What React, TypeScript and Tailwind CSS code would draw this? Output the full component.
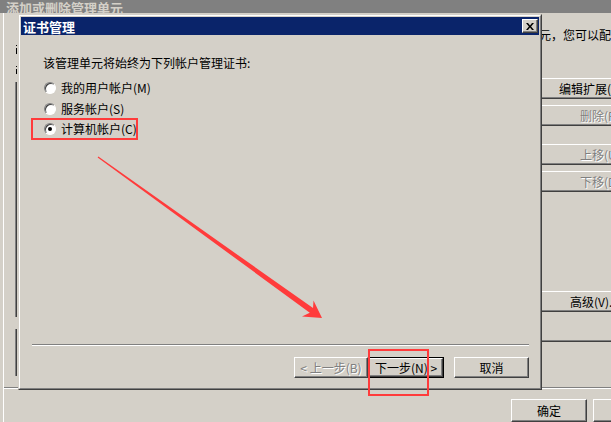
import React from "react";

const raised =
  "border border-t-white border-l-white border-r-[#404040] border-b-[#404040] shadow-[inset_-1px_-1px_#808080]";
const disabledText = "text-[#808080] [text-shadow:1px_1px_0_#fff]";

function Radio({ checked }: { checked?: boolean }) {
  return (
    <span className="w-[12px] h-[12px] shrink-0 rounded-full bg-white border border-t-[#808080] border-l-[#808080] border-r-white border-b-white shadow-[inset_1px_1px_0_#404040] flex items-center justify-center">
      {checked && <span className="w-[4px] h-[4px] rounded-full bg-black" />}
    </span>
  );
}

function CloseButton() {
  return (
    <div className={`w-[16px] h-[14px] bg-[#d4d0c8] flex items-center justify-center ${raised}`}>
      <svg width="8" height="7" viewBox="0 0 8 7">
        <path d="M0 0H2L4 2.4L6 0H8L5.1 3.5L8 7H6L4 4.6L2 7H0L2.9 3.5Z" fill="#000" />
      </svg>
    </div>
  );
}

function SideButton({ label, pad, disabled }: { label: string; pad: string; disabled?: boolean }) {
  return (
    <div
      className={`h-[21px] w-[110px] flex items-center leading-none ${pad} ${raised} ${
        disabled ? disabledText : "text-black"
      }`}
    >
      {label}
    </div>
  );
}

export default function App() {
  return (
    <div className="relative w-[611px] h-[422px] overflow-hidden bg-[#d4d0c8] flex flex-col text-[12px] font-['SimSun','Noto_Sans_CJK_SC',sans-serif]">
      {/* background dialog */}
      <div className="h-[15px] bg-[#808080] pl-[6px] text-[13px] text-[#d4d0c8] font-bold leading-[16px] overflow-hidden">
        添加或删除管理单元
      </div>
      <div className="flex-1 flex flex-col ml-[3px] border-l border-white">
        <div className="h-[374px] flex">
          <div className="w-[537px] flex flex-col pl-[11px]">
            <div className="mt-[32px] ml-[1px] w-[1px] h-[1px] bg-black" />
            <div className="mt-[2px] ml-[1px] w-[1px] h-[6px] bg-black" />
            <div className="mt-[12px] ml-[1px] w-[1px] h-[1px] bg-black" />
            <div className="mt-[2px] ml-[1px] w-[1px] h-[5px] bg-black" />
            <div className="mt-[8px] w-[2px] h-[235px] border-l border-l-[#808080] border-r border-r-[#404040]" />
            <div className="mt-[12px] w-[2px] h-[47px] border-l border-l-[#808080] border-r border-r-[#404040]" />
          </div>
          <div className="w-[70px] flex flex-col">
            <div className="mt-[14px] -ml-[2px] leading-[16px] whitespace-nowrap">元，您可以配置</div>
            <div className="mt-[35px]">
              <SideButton label="编辑扩展(X)..." pad="pl-[17px]" />
            </div>
            <div className="mt-[6px]">
              <SideButton label="删除(R)" pad="pl-[38px]" disabled />
            </div>
            <div className="mt-[18px]">
              <SideButton label="上移(U)" pad="pl-[38px]" disabled />
            </div>
            <div className="mt-[6px]">
              <SideButton label="下移(D)" pad="pl-[38px]" disabled />
            </div>
            <div className="mt-[99px]">
              <SideButton label="高级(V)..." pad="pl-[28px]" />
            </div>
            <div className="mt-[28px] h-[1px] bg-[#808080] w-[110px]" />
            <div className="h-[1px] bg-[#404040] w-[110px]" />
          </div>
        </div>
        <div className="h-[1px] bg-[#808080]" />
        <div className="h-[1px] bg-white" />
        <div className="mt-[10px] ml-[507px] flex gap-[6px]">
          <div className={`w-[76px] h-[23px] shrink-0 flex items-center justify-center ${raised}`}>确定</div>
          <div className={`w-[76px] h-[23px] shrink-0 flex items-center justify-center ${raised}`}>取消</div>
        </div>
      </div>

      {/* foreground dialog */}
      <div className="absolute left-[18px] top-[14px] w-[524px] h-[376px] bg-[#d4d0c8] border border-t-[#d4d0c8] border-l-[#d4d0c8] border-r-[#404040] border-b-[#404040] flex flex-col">
        <div className="flex-1 flex flex-col border border-t-white border-l-white border-r-[#808080] border-b-[#808080] p-[1px]">
          <div className="h-[18px] bg-[#0a246a] flex items-center justify-between pl-[2px] pr-[1px]">
            <span className="text-white text-[13px] font-bold leading-none">证书管理</span>
            <CloseButton />
          </div>
          <p className="mt-[20px] pl-[22px] leading-[16px] text-black">该管理单元将始终为下列帐户管理证书:</p>
          <div className="mt-[7px] pl-[23px] flex flex-col">
            {[
              { label: "我的用户帐户(M)", checked: false },
              { label: "服务帐户(S)", checked: false },
              { label: "计算机帐户(C)", checked: true },
            ].map((o) => (
              <label key={o.label} className="h-[20.5px] flex items-center gap-[5px] text-black">
                <Radio checked={o.checked} />
                <span className="leading-none">{o.label}</span>
              </label>
            ))}
          </div>
          <div className="mt-auto ml-[11px] mr-[10px] h-[1px] bg-[#808080]" />
          <div className="ml-[11px] mr-[10px] h-[1px] bg-white" />
          <div className="mt-[11px] mb-[9px] pr-[10px] flex justify-end">
            <div className={`w-[74px] h-[21px] flex items-center justify-center ${raised} ${disabledText}`}>
              &lt; 上一步(B)
            </div>
            <div className="w-[76px] h-[21px] border border-black">
              <div className={`w-full h-full flex items-center justify-center text-black ${raised}`}>
                下一步(N) &gt;
              </div>
            </div>
            <div className={`ml-[10px] w-[75px] h-[21px] flex items-center justify-center text-black ${raised}`}>
              取消
            </div>
          </div>
        </div>
      </div>

      {/* red annotations */}
      <div className="absolute left-[31px] top-[118px] w-[107px] h-[22px] border-2 border-[#ff3b3b]" />
      <div className="absolute left-[368px] top-[349px] w-[61px] h-[47px] border-2 border-[#ff3b3b]" />
      <svg className="absolute inset-0 pointer-events-none" width="611" height="422" viewBox="0 0 611 422">
        <polygon
          points="98.35,156.51 313.03,308.12 313.5,300.5 322,318 302,316.5 309.77,312.68 97.65,157.49"
          fill="#ff3b3b"
        />
      </svg>
    </div>
  );
}
